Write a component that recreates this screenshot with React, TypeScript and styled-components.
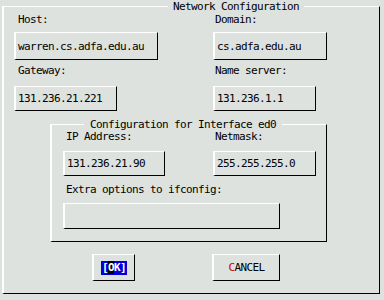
import React from 'react'
import styled, { createGlobalStyle } from 'styled-components'

const Global = createGlobalStyle`
  html, body {
    margin: 0;
    padding: 0;
    background: #dee2de;
  }
  body {
    font-family: "DejaVu Sans Mono", "Liberation Mono", monospace;
    font-size: 11px;
    letter-spacing: -0.62px;
    line-height: 13px;
    color: #000;
  }
`

const Wrap = styled.div`
  width: 384px;
  height: 300px;
  padding: 0 4px 0 2px;
  box-sizing: border-box;
`

const Frame = styled.fieldset<{ $left: number; $bottom: number; $width?: number; $top?: number }>`
  margin: ${(p) => p.$top || 0}px 0 0 ${(p) => p.$left}px;
  padding: 0 0 ${(p) => p.$bottom}px ${(p) => p.$left === 0 ? 10 : 11}px;
  min-inline-size: 0;
  border-style: solid;
  border-color: #fff #000 #000 #fff;
  border-width: 1px 1px 1px 2px;
  width: ${(p) => (p.$width ? p.$width + 'px' : 'auto')};
  box-sizing: border-box;
`

const Legend = styled.legend<{ $offset: number; $pad: number; $lh: number }>`
  margin-left: ${(p) => p.$offset}px;
  padding: 0 ${(p) => p.$pad}px;
  line-height: ${(p) => p.$lh}px;
  white-space: pre;
`

const Grid = styled.div<{ $col: number }>`
  display: grid;
  grid-template-columns: ${(p) => p.$col}px auto;
  row-gap: 4px;
  align-items: start;
`

const Field = styled.div`
  display: flex;
  flex-direction: column;
  align-items: flex-start;
`

const Label = styled.div<{ $indent: number }>`
  padding-left: ${(p) => p.$indent}px;
  height: 13px;
  white-space: pre;
`

const Entry = styled.div<{ $w: number; $h: number; $gap: number }>`
  margin-top: ${(p) => p.$gap}px;
  width: ${(p) => p.$w}px;
  height: ${(p) => p.$h}px;
  box-sizing: border-box;
  border-style: solid;
  border-color: #fff #000 #000 #fff;
  border-width: 1px 1px 1px 2px;
  padding-left: 2px;
  display: flex;
  align-items: center;
  white-space: pre;
`

const Buttons = styled.div`
  display: flex;
  margin-top: 12px;
  padding-left: 78px;
  gap: 77px;
`

const Button = styled.div<{ $w: number }>`
  width: ${(p) => p.$w}px;
  height: 27px;
  box-sizing: border-box;
  border-style: solid;
  border-color: #fff #000 #000 #fff;
  border-width: 1px 1px 1px 2px;
  display: flex;
  align-items: center;
  justify-content: center;
`

const Focus = styled.span`
  background: #0000d8;
  color: #fff;
  font-weight: bold;
  padding: 0 1px 1px 1px;
  line-height: 13px;
`

const Cursor = styled.span`
  background: #000;
`

const Hot = styled.span`
  color: #d00000;
`

export default function App() {
  return (
    <Wrap>
      <Global />
      <Frame $left={0} $bottom={12}>
        <Legend $offset={154} $pad={5} $lh={13}>Network Configuration</Legend>
        <Grid $col={199}>
          <Field>
            <Label $indent={4}>Host:</Label>
            <Entry $w={144} $h={28} $gap={6}>warren.cs.adfa.edu.au</Entry>
          </Field>
          <Field>
            <Label $indent={2}>Domain:</Label>
            <Entry $w={114} $h={28} $gap={6}>cs.adfa.edu.au</Entry>
          </Field>
          <Field>
            <Label $indent={4}>Gateway:</Label>
            <Entry $w={103} $h={25} $gap={9}>131.236.21.221</Entry>
          </Field>
          <Field>
            <Label $indent={2}>Name server:</Label>
            <Entry $w={103} $h={25} $gap={9}>131.236.1.1</Entry>
          </Field>
        </Grid>
        <Frame $left={36} $top={8} $bottom={12} $width={277}>
          <Legend $offset={21} $pad={6} $lh={11}>Configuration for Interface ed0</Legend>
          <Grid $col={150}>
            <Field>
              <Label $indent={3}>IP Address:</Label>
              <Entry $w={102} $h={25} $gap={8}>131.236.21.90</Entry>
            </Field>
            <Field>
              <Label $indent={2}>Netmask:</Label>
              <Entry $w={103} $h={25} $gap={8}>255.255.255.0</Entry>
            </Field>
          </Grid>
          <Field style={{ marginTop: 7 }}>
            <Label $indent={3}>Extra options to ifconfig:</Label>
            <Entry $w={217} $h={26} $gap={7}></Entry>
          </Field>
        </Frame>
        <Buttons>
          <Button $w={43}>
            <Focus>[<Cursor>O</Cursor>K]</Focus>
          </Button>
          <Button $w={68}>
            <span><Hot>C</Hot>ANCEL</span>
          </Button>
        </Buttons>
      </Frame>
    </Wrap>
  )
}
